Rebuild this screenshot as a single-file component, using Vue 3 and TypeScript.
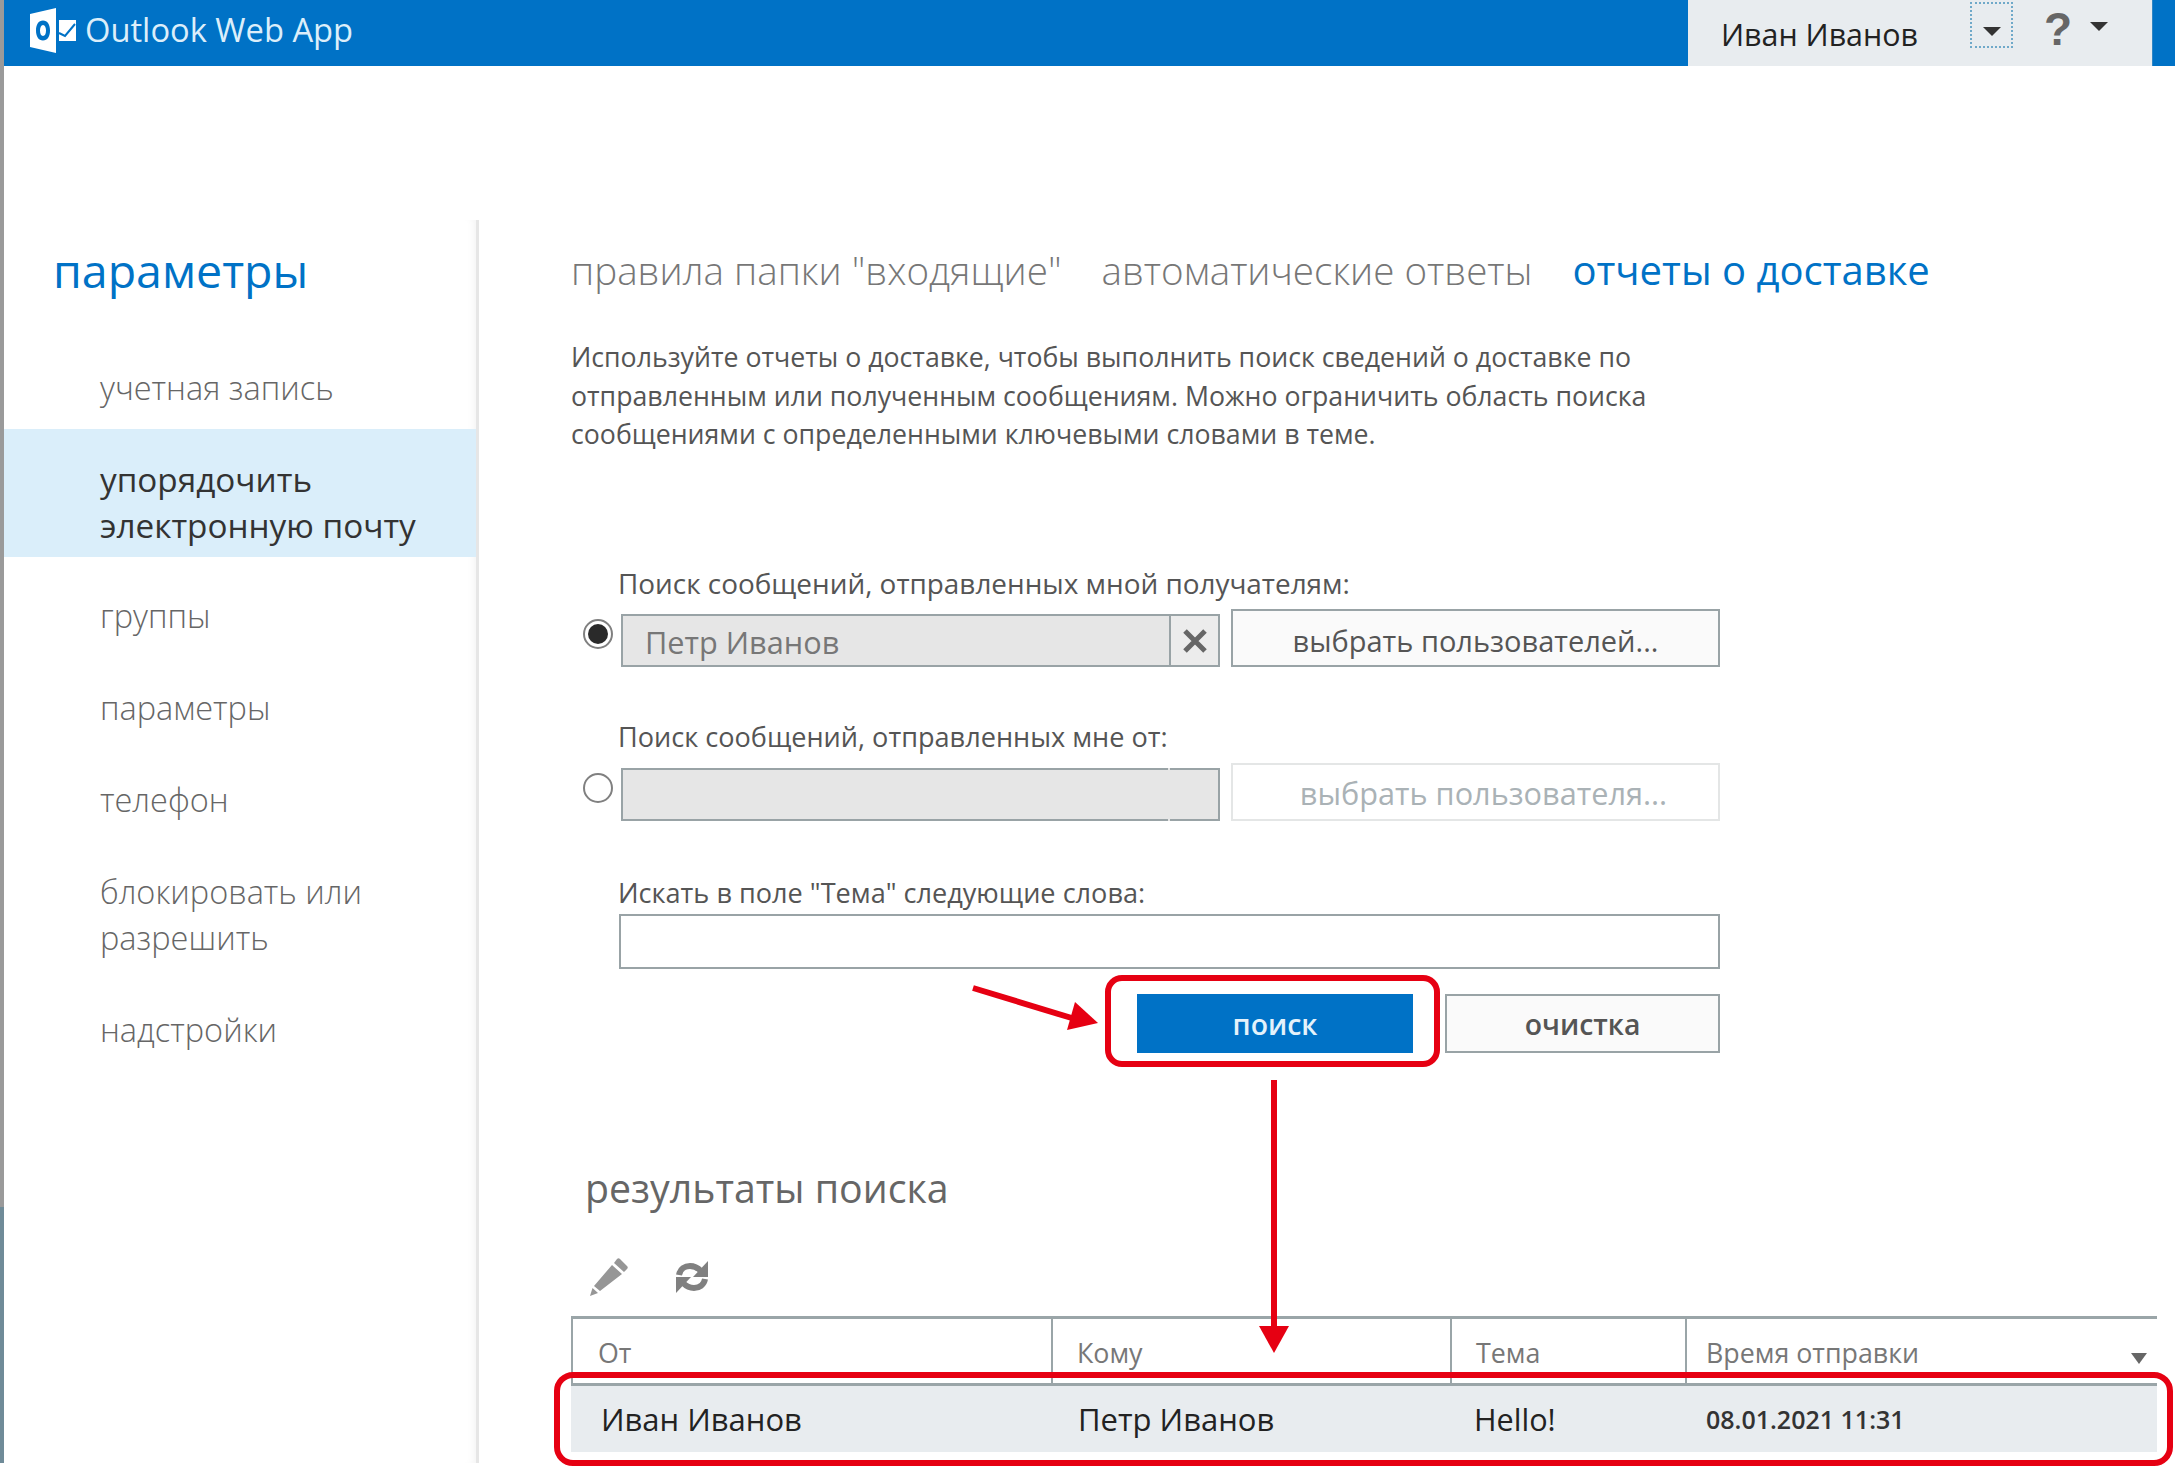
<script setup lang="ts">
const nav = [
  { text: ['учетная запись'], kind: 'first' },
  { text: ['упорядочить', 'электронную почту'], kind: 'active' },
  { text: ['группы'], kind: '' },
  { text: ['параметры'], kind: '' },
  { text: ['телефон'], kind: '' },
  { text: ['блокировать или', 'разрешить'], kind: 'double' },
  { text: ['надстройки'], kind: '' },
]
const columns = [
  { key: 'from', title: 'От', value: 'Иван Иванов' },
  { key: 'to', title: 'Кому', value: 'Петр Иванов' },
  { key: 'subject', title: 'Тема', value: 'Hello!' },
  { key: 'time', title: 'Время отправки', value: '08.01.2021 11:31' },
]
</script>

<template>
  <div class="page">
    <header class="top">
      <div class="brand">
        <svg class="logo" width="46" height="46" viewBox="0 0 46 46">
          <path fill="#fff" fill-rule="evenodd" d="M0 6 26 0V45L0 39ZM13 12.500C8.500 12.500 6 16.500 6 22.500S8.500 32.500 13 32.500 20 28.500 20 22.500 17.500 12.500 13 12.500ZM13 17C15 17 16 19.500 16 22.500S15 28 13 28 10 25.500 10 22.500 11 17 13 17Z" />
          <path fill="#fff" d="M29 12H46V33H29Z" />
          <path fill="none" stroke="#0072c6" stroke-width="2" d="M29 25 35 28 45 16" />
        </svg>
        <span class="brand-name">Outlook Web App</span>
      </div>
      <div class="user">
        <span class="user-name">Иван Иванов</span>
        <span class="focus-box"><i class="caret"></i></span>
        <span class="help">?</span>
        <i class="caret help-caret"></i>
      </div>
    </header>

    <div class="content">
      <aside class="side">
        <h1 class="side-title">параметры</h1>
        <nav class="side-nav">
          <div
            v-for="item in nav"
            :key="item.text[0]"
            class="side-item"
            :class="item.kind"
          >
            <span v-for="line in item.text" :key="line">{{ line }}</span>
          </div>
        </nav>
      </aside>

      <main class="main">
        <div class="tabs">
          <span class="tab">правила папки "входящие"</span>
          <span class="tab">автоматические ответы</span>
          <span class="tab current">отчеты о доставке</span>
        </div>

        <p class="intro">
          Используйте отчеты о доставке, чтобы выполнить поиск сведений о доставке по<br />
          отправленным или полученным сообщениям. Можно ограничить область поиска<br />
          сообщениями с определенными ключевыми словами в теме.
        </p>

        <section class="form">
          <label class="field-label first">Поиск сообщений, отправленных мной получателям:</label>
          <div class="pick-row">
            <span class="radio on"><i></i></span>
            <div class="pick-input">
              <span class="pick-value">Петр Иванов</span>
              <span class="clear">
                <svg width="26" height="26" viewBox="0 0 26 26">
                  <path d="M3 3 23 23M23 3 3 23" stroke="#666" stroke-width="5" fill="none" />
                </svg>
              </span>
            </div>
            <button class="pick-btn">выбрать пользователей...</button>
          </div>

          <label class="field-label second">Поиск сообщений, отправленных мне от:</label>
          <div class="pick-row">
            <span class="radio"></span>
            <div class="pick-input"><i class="seam"></i></div>
            <button class="pick-btn disabled">выбрать пользователя...</button>
          </div>

          <label class="field-label third">Искать в поле "Тема" следующие слова:</label>
          <div class="subject-input"></div>

          <div class="actions">
            <button class="btn primary">поиск</button>
            <button class="btn">очистка</button>
          </div>
        </section>

        <h2 class="results-title">результаты поиска</h2>

        <div class="toolbar">
          <svg width="38" height="38" viewBox="0 0 38 38">
            <path fill="#969696" d="M30 1 37 8C38 9 38 10 37 11L34 14 24 5 27 1C28 0 29 0 30 1ZM22 7 32 16 10 33 4 28ZM2.500 30 8 35 0 38Z" />
          </svg>
          <svg class="refresh" width="34" height="34" viewBox="0 0 34 34">
            <path fill="none" stroke="#808080" stroke-width="6" d="M4 15C5 9 10 6 15 6 20 6 23 8 26 11" />
            <path fill="#808080" d="M33 1V17H18Z" />
            <path fill="none" stroke="#808080" stroke-width="6" d="M30 19C29 25 24 28 19 28 14 28 11 26 8 23" />
            <path fill="#808080" d="M1 33V17H16Z" />
          </svg>
        </div>

        <div class="grid">
          <div class="grid-head">
            <div v-for="col in columns" :key="col.key" class="cell head-cell" :class="col.key">
              {{ col.title }}
            </div>
            <i class="sort"></i>
          </div>
          <div class="grid-row">
            <div v-for="col in columns" :key="col.key" class="cell row-cell" :class="col.key">
              {{ col.value }}
            </div>
          </div>
        </div>
      </main>
    </div>

    <svg class="notes" width="2175" height="1469" viewBox="0 0 2175 1469">
      <rect x="1108" y="978" width="329" height="86" rx="14" fill="none" stroke="#e60012" stroke-width="6" />
      <rect x="557" y="1375" width="1613" height="88" rx="16" fill="none" stroke="#e60012" stroke-width="6" />
      <path d="M973 988 1075 1019" fill="none" stroke="#e60012" stroke-width="6" />
      <path d="M1098 1023 1075 1002 1067 1030Z" fill="#e60012" />
      <path d="M1274 1080V1328" fill="none" stroke="#e60012" stroke-width="6" />
      <path d="M1259 1326H1289L1274 1353Z" fill="#e60012" />
    </svg>
  </div>
</template>

<style>
html,
body {
  margin: 0;
  background: #fff;
}
</style>

<style scoped>
.page {
  position: relative;
  box-sizing: border-box;
  width: 2175px;
  height: 1469px;
  overflow: hidden;
  padding-left: 4px;
  background:
    linear-gradient(#9a9a9a 1207px, #6f8b98 1207px) 0 0 / 4px 1463px no-repeat,
    #fff;
  font-family: "Open Sans", "Noto Sans", sans-serif;
  color: #666;
}

.top {
  display: flex;
  justify-content: space-between;
  height: 66px;
  background: #0072c6;
}
.brand {
  display: flex;
  align-items: center;
  padding-left: 26px;
  gap: 9px;
}
.logo {
  margin-top: -5px;
}
.brand-name {
  font-size: 32.700px;
  line-height: 60px;
  color: #dceefa;
  margin-top: -6px;
}
.user {
  display: flex;
  align-items: flex-start;
  box-sizing: border-box;
  width: 465px;
  margin-right: 22px;
  padding-left: 33px;
  background: #e8ecef;
  border-right: 1px solid #2f86c5;
  color: #222;
}
.user-name {
  font-size: 30.400px;
  line-height: 70px;
  width: 249px;
}
.focus-box {
  display: flex;
  justify-content: center;
  box-sizing: border-box;
  width: 43px;
  height: 46px;
  margin-top: 2px;
  padding-top: 23px;
  border: 2px dotted #6fa9c9;
}
.caret {
  display: block;
  width: 0;
  height: 0;
  border-left: 9px solid transparent;
  border-right: 9px solid transparent;
  border-top: 9px solid #333;
}
.help {
  margin-left: 31px;
  font-family: "Liberation Sans", sans-serif;
  font-size: 46px;
  font-weight: 700;
  line-height: 58px;
  color: #666;
}
.help-caret {
  margin: 22px 0 0 18px;
}

.content {
  display: flex;
  padding-top: 154px;
}
.side {
  box-sizing: border-box;
  width: 475px;
  height: 1243px;
  border-right: 3px solid #e6e6e6;
  box-shadow: inset -8px 0 8px -6px rgba(0, 0, 0, 0.05);
}
.side-title {
  margin: 20px 0 0 49px;
  font-size: 46.500px;
  font-weight: 400;
  line-height: 60px;
  color: #0072c6;
}
.side-nav {
  margin-top: 47px;
}
.side-item {
  display: flex;
  flex-direction: column;
  justify-content: center;
  box-sizing: border-box;
  padding-left: 96px;
  font-size: 32.500px;
  font-weight: 300;
  line-height: 46px;
  height: 92px;
  color: #666;
}
.side-item.first {
  height: 82px;
}
.side-item.double {
  height: 138px;
}
.side-item.active {
  height: 128px;
  margin-bottom: 13px;
  padding-top: 18px;
  width: 472px;
  font-size: 33.300px;
  font-weight: 400;
  background: #daeefa;
  color: #333;
}

.main {
  flex: 1;
  padding-left: 92px;
}
.tabs {
  display: flex;
  margin-top: 25px;
  font-size: 38.600px;
  font-weight: 300;
  line-height: 50px;
  gap: 40px;
  color: #777;
}
.tab.current {
  font-size: 40px;
  font-weight: 400;
  color: #0072c6;
}
.intro {
  margin: 43px 0 0;
  font-size: 26.700px;
  line-height: 38.500px;
  color: #555;
}
.form {
  width: 1149px;
}
.field-label {
  display: block;
  margin-left: 47px;
  font-size: 27.100px;
  line-height: 36px;
  color: #555;
  white-space: nowrap;
}
.field-label.first {
  margin-top: 111.500px;
  font-size: 27.900px;
}
.field-label.second {
  margin-top: 52px;
}
.field-label.third {
  margin-top: 54px;
}
.pick-row {
  display: flex;
  align-items: flex-end;
  height: 58px;
  margin-top: 8px;
  padding-left: 12px;
}
.radio {
  display: flex;
  align-items: center;
  justify-content: center;
  box-sizing: border-box;
  width: 30px;
  height: 30px;
  margin: 0 8px 18px 0;
  border: 2px solid #808080;
  border-radius: 50%;
  background: #fff;
}
.radio i {
  display: block;
  width: 20px;
  height: 20px;
  border-radius: 50%;
  background: #2a2a2a;
}
.pick-input {
  display: flex;
  align-items: center;
  justify-content: space-between;
  box-sizing: border-box;
  width: 599px;
  height: 53px;
  padding-left: 22px;
  background: #e6e6e6;
  border: 2px solid #99a3a6;
  font-size: 30.700px;
  color: #777;
}
.pick-value {
  padding-top: 3px;
}
.seam {
  display: block;
  width: 2px;
  height: 53px;
  margin-left: auto;
  margin-right: 48px;
  background: linear-gradient(#e6e6e6 2px, transparent 2px, transparent 51px, #e6e6e6 51px);
}
.clear {
  display: flex;
  align-items: center;
  justify-content: center;
  box-sizing: border-box;
  width: 49px;
  height: 49px;
  background: #ececec;
  border-left: 2px solid #99a3a6;
}
.pick-btn {
  box-sizing: border-box;
  width: 489px;
  height: 58px;
  margin-left: 11px;
  padding: 4px 0 0;
  background: #fafafa;
  border: 2px solid #99a3a6;
  font: inherit;
  font-size: 29px;
  color: #555;
}
.pick-btn.disabled {
  padding: 2px 0 0 16px;
  border-color: #e4e6e6;
  background: #fff;
  font-size: 30.700px;
  color: #aab2b6;
}
.subject-input {
  box-sizing: border-box;
  width: 1101px;
  height: 55px;
  margin: 3px 0 0 48px;
  background: #fff;
  border: 2px solid #99a3a6;
}
.actions {
  display: flex;
  justify-content: flex-end;
  gap: 32px;
  margin-top: 25px;
}
.btn {
  box-sizing: border-box;
  width: 275px;
  height: 59px;
  padding: 0;
  background: #fafafa;
  border: 2px solid #99a3a6;
  font: inherit;
  font-size: 28.400px;
  font-weight: 600;
  color: #555;
}
.btn.primary {
  width: 276px;
  background: #0072c6;
  border: none;
  color: #e4f2fb;
}
.results-title {
  margin: 110px 0 0 14px;
  font-size: 39.300px;
  font-weight: 400;
  line-height: 50px;
  color: #666;
}
.toolbar {
  display: flex;
  align-items: center;
  gap: 47px;
  height: 38px;
  margin: 45px 0 20px 19px;
}
.grid {
  width: 1586px;
}
.grid-head {
  position: relative;
  display: grid;
  grid-template-columns: 480px 399px 235px 472px;
  height: 70px;
  box-sizing: border-box;
  border-top: 3px solid #9aa5a8;
  border-bottom: 3px solid #9aa5a8;
}
.grid-row {
  display: grid;
  grid-template-columns: 480px 399px 235px 472px;
  height: 66px;
  background: #e8ecef;
}
.cell {
  display: flex;
  align-items: center;
  box-sizing: border-box;
}
.head-cell {
  padding-top: 2px;
  font-size: 26.800px;
  color: #777;
  border-left: 2px solid #9aa5a8;
}
.head-cell.from {
  padding-left: 25px;
}
.head-cell.to,
.head-cell.subject {
  padding-left: 24px;
}
.head-cell.time {
  padding-left: 19px;
}
.row-cell {
  font-size: 31px;
  color: #222;
}
.row-cell.from {
  padding-left: 30px;
}
.row-cell.to {
  padding-left: 27px;
}
.row-cell.subject {
  padding-left: 24px;
  font-size: 30.600px;
}
.row-cell.time {
  padding-left: 21px;
  font-size: 25px;
  font-weight: 600;
  color: #333;
}
.sort {
  position: absolute;
  right: 10px;
  top: 34px;
  width: 0;
  height: 0;
  border-left: 8px solid transparent;
  border-right: 8px solid transparent;
  border-top: 11px solid #666;
}
.notes {
  position: absolute;
  left: 0;
  top: 0;
  pointer-events: none;
}
</style>
